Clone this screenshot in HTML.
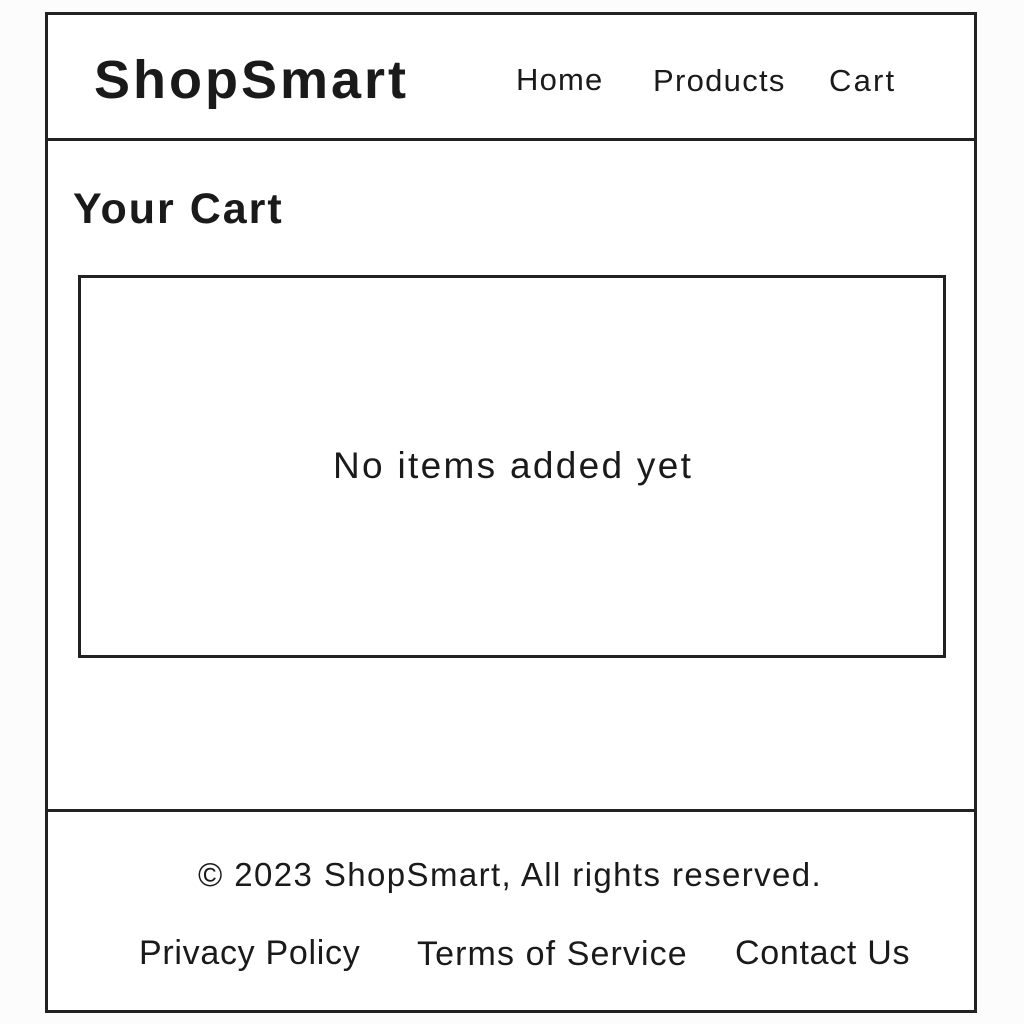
<!DOCTYPE html>
<html><head><meta charset="utf-8"><style>
html,body{margin:0;padding:0;background:#fcfcfc;}
body{width:1024px;height:1024px;position:relative;font-family:"Liberation Sans",sans-serif;color:#1a1a1a;overflow:hidden}
.frame{position:absolute;left:45px;top:12px;width:926px;height:995px;border:3px solid #222;background:#fff}
.hline{position:absolute;left:45px;width:932px;height:3px;background:#222}
.box{position:absolute;left:78px;top:275px;width:862px;height:377px;border:3px solid #222}
.t{position:absolute;white-space:nowrap;line-height:1}
</style></head><body>
<div class="frame"></div>
<div class="hline" style="top:138px"></div>
<div class="hline" style="top:809px"></div>
<div class="box"></div>
<div class="t" style="left:94px;top:53px;font-size:54px;font-weight:bold;letter-spacing:3px">ShopSmart</div>
<div class="t" style="left:516px;top:64px;font-size:31px;letter-spacing:1.2px">Home</div>
<div class="t" style="left:653px;top:65px;font-size:31px;letter-spacing:1.3px">Products</div>
<div class="t" style="left:829px;top:65px;font-size:31px;letter-spacing:2.2px">Cart</div>
<div class="t" style="left:73px;top:188px;font-size:43px;font-weight:bold;letter-spacing:2px">Your Cart</div>
<div class="t" style="left:333px;top:447px;font-size:37px;letter-spacing:2.3px">No items added yet</div>
<div class="t" style="left:198px;top:858px;font-size:33px;letter-spacing:1.4px">© 2023 ShopSmart, All rights reserved.</div>
<div class="t" style="left:139px;top:936px;font-size:34px;letter-spacing:0.7px">Privacy Policy</div>
<div class="t" style="left:417px;top:937px;font-size:34px;letter-spacing:1.1px">Terms of Service</div>
<div class="t" style="left:735px;top:936px;font-size:34px;letter-spacing:0.7px">Contact Us</div>
</body></html>
